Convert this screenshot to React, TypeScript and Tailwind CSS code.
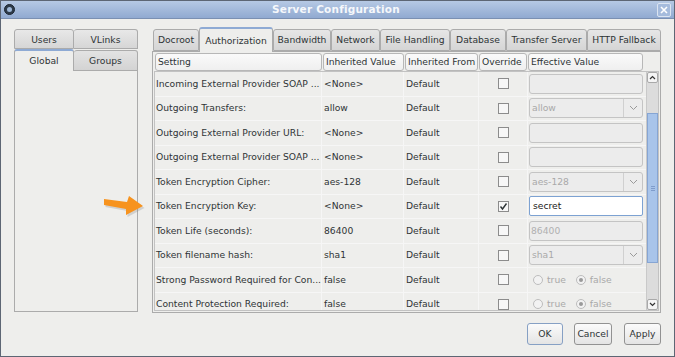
import React from "react";

type Effective =
  | { kind: "input"; value?: string; active?: boolean }
  | { kind: "combo"; value: string }
  | { kind: "radio" };

interface Row {
  setting: string;
  inherited: string;
  from: string;
  override: boolean;
  effective: Effective;
}

const rows: Row[] = [
  { setting: "Incoming External Provider SOAP ...", inherited: "<None>", from: "Default", override: false, effective: { kind: "input" } },
  { setting: "Outgoing Transfers:", inherited: "allow", from: "Default", override: false, effective: { kind: "combo", value: "allow" } },
  { setting: "Outgoing External Provider URL:", inherited: "<None>", from: "Default", override: false, effective: { kind: "input" } },
  { setting: "Outgoing External Provider SOAP ...", inherited: "<None>", from: "Default", override: false, effective: { kind: "input" } },
  { setting: "Token Encryption Cipher:", inherited: "aes-128", from: "Default", override: false, effective: { kind: "combo", value: "aes-128" } },
  { setting: "Token Encryption Key:", inherited: "<None>", from: "Default", override: true, effective: { kind: "input", value: "secret", active: true } },
  { setting: "Token Life (seconds):", inherited: "86400", from: "Default", override: false, effective: { kind: "input", value: "86400" } },
  { setting: "Token filename hash:", inherited: "sha1", from: "Default", override: false, effective: { kind: "combo", value: "sha1" } },
  { setting: "Strong Password Required for Con...", inherited: "false", from: "Default", override: false, effective: { kind: "radio" } },
  { setting: "Content Protection Required:", inherited: "false", from: "Default", override: false, effective: { kind: "radio" } },
];

const topTabs = [
  { label: "Docroot", w: "w-[46px]" },
  { label: "Authorization", w: "w-[74px]", active: true },
  { label: "Bandwidth", w: "w-[58px]" },
  { label: "Network", w: "w-[49px]" },
  { label: "File Handling", w: "w-[70px]" },
  { label: "Database", w: "w-[56px]" },
  { label: "Transfer Server", w: "w-[81px]" },
  { label: "HTTP Fallback", w: "w-[74px]" },
];

const Chevron = () => (
  <svg width="9" height="6" viewBox="0 0 9 6">
    <path d="M1 1 L4.5 4.5 L8 1" fill="none" stroke="#9a9a9a" strokeWidth="1" />
  </svg>
);

const Radio = ({ checked }: { checked?: boolean }) => (
  <span className="w-[10px] h-[10px] rounded-full border border-[#bdbdbd] bg-[#f2f2f2] flex items-center justify-center">
    {checked && <span className="w-[4px] h-[4px] rounded-full bg-[#9a9a9a]" />}
  </span>
);

const EffectiveCell = ({ e }: { e: Effective }) => {
  if (e.kind === "combo") {
    return (
      <div className="w-[114px] h-[20px] rounded-[3px] border border-[#c4c4c4] bg-[#ececec] flex items-center">
        <span className="flex-1 pl-[2px] text-[#a9a9a9]">{e.value}</span>
        <span className="w-[19px] h-full border-l border-[#d0d0d0] flex items-center justify-center">
          <Chevron />
        </span>
      </div>
    );
  }
  if (e.kind === "radio") {
    return (
      <div className="flex items-center h-[20px] pl-[4px] text-[#a9a9a9]">
        <Radio />
        <span className="ml-[4px]">true</span>
        <span className="ml-[10px]">
          <Radio checked />
        </span>
        <span className="ml-[4px]">false</span>
      </div>
    );
  }
  return (
    <div
      className={
        e.active
          ? "w-[114px] h-[20px] rounded-[2px] border border-[#7da2d2] bg-white flex items-center pl-[3px] text-[#222]"
          : "w-[114px] h-[20px] rounded-[3px] border border-[#c4c4c4] bg-[#ececec] flex items-center pl-[1px] text-[#b0b0b0]"
      }
    >
      {e.value}
    </div>
  );
};

export default function App() {
  return (
    <div className="relative w-[675px] h-[357px] bg-[#eeeeec] border border-[#5d6674] flex flex-col font-['DejaVu_Sans',sans-serif] text-[9.2px] text-[#2e3436] overflow-hidden">
      {/* title bar */}
      <div className="h-[18px] flex items-center bg-gradient-to-b from-[#b6c9e4] to-[#91aad1] border-b border-[#7b90b2] px-[3px]">
        <span className="w-[11px] h-[11px] rounded-full bg-[#2e3b4a] border border-[#1c2530] flex items-center justify-center">
          <span className="w-[5px] h-[5px] rounded-full bg-[#9fb8d8]" />
        </span>
        <span className="flex-1 text-center text-[10.5px] font-bold text-[#f6f8fb] tracking-[0.2px]">Server Configuration</span>
        <span className="w-[14px] h-[14px] rounded-[2px] border border-[#dbe4f1] bg-[#a5bbdc] flex items-center justify-center">
          <svg width="8" height="8" viewBox="0 0 8 8">
            <path d="M1 1 L7 7 M7 1 L1 7" stroke="#ffffff" strokeWidth="1.6" />
          </svg>
        </span>
      </div>

      <div className="flex-1 flex flex-col px-[13px] pt-[8px]">
        <div className="flex gap-[14px]">
          {/* left tabs */}
          <div className="w-[124px] flex flex-col mt-[2px]">
            <div className="flex h-[20px]">
              <div className="w-[60px] rounded-t-[3px] border border-[#ababab] bg-gradient-to-b from-[#e8e8e8] to-[#d6d6d6] flex items-center justify-center pt-[2px]">Users</div>
              <div className="w-[64px] rounded-t-[3px] border border-l-0 border-[#ababab] bg-gradient-to-b from-[#e8e8e8] to-[#d6d6d6] flex items-center justify-center pt-[2px]">VLinks</div>
            </div>
            <div className="flex h-[22px] items-end">
              <div className="w-[60px] h-[22px] rounded-t-[3px] border border-b-0 border-[#ababab] border-t-2 border-t-[#8eaad4] bg-[#eeeeec] flex items-center justify-center relative z-10">Global</div>
              <div className="w-[64px] h-[21px] rounded-t-[3px] border border-l-0 border-[#ababab] bg-gradient-to-b from-[#e3e3e3] to-[#d3d3d3] flex items-center justify-center">Groups</div>
            </div>
            <div className="h-[242px] border border-[#ababab] -mt-[1px] bg-[#eeeeec]" />
          </div>

          {/* right side */}
          <div className="w-[509px] flex flex-col">
            <div className="flex h-[24px] items-end pl-[1px]">
              {topTabs.map((t) =>
                t.active ? (
                  <div
                    key={t.label}
                    className={`${t.w} h-[25px] rounded-t-[3px] border border-b-0 border-[#ababab] border-t-2 border-t-[#8eaad4] bg-[#eeeeec] flex items-center justify-center relative z-10 -mb-[1px]`}
                  >
                    {t.label}
                  </div>
                ) : (
                  <div
                    key={t.label}
                    className={`${t.w} h-[22px] rounded-t-[3px] border border-[#ababab] bg-gradient-to-b from-[#e6e6e6] to-[#d5d5d5] flex items-center justify-center`}
                  >
                    {t.label}
                  </div>
                )
              )}
            </div>
            <div className="h-[262px] border border-[#ababab] p-[1px] flex flex-col">
              {/* header */}
              <div className="flex h-[18px] gap-[1px] pl-[1px]">
                {[
                  { l: "Setting", w: "w-[167px]" },
                  { l: "Inherited Value", w: "w-[81px]" },
                  { l: "Inherited From", w: "w-[73px]" },
                  { l: "Override", w: "w-[48px]" },
                  { l: "Effective Value", w: "w-[115px]" },
                ].map((h) => (
                  <div
                    key={h.l}
                    className={`${h.w} rounded-[3px] border border-[#b7b7b7] bg-gradient-to-b from-[#fafafa] to-[#efefef] flex items-center pl-[2px]`}
                  >
                    {h.l}
                  </div>
                ))}
              </div>
              <div className="flex flex-1 min-h-0 border border-[#c2c2c2]">
                <div className="flex-1 overflow-hidden">
                  {rows.map((r) => (
                    <div key={r.setting} className="flex h-[24.5px] items-center border-b border-[#f6f6f6] whitespace-nowrap">
                      <div className="w-[167px] h-full flex items-center pl-[1px] border-r border-[#f6f6f6] overflow-hidden">{r.setting}</div>
                      <div className="w-[82px] h-full flex items-center pl-[2px] border-r border-[#f6f6f6]">{r.inherited}</div>
                      <div className="w-[75px] h-full flex items-center pl-[2px] border-r border-[#f6f6f6]">{r.from}</div>
                      <div className="w-[49px] h-full flex items-center justify-center border-r border-[#f6f6f6]">
                        <span className="w-[11px] h-[11px] border border-[#8c8c8c] bg-[#f7f7f7] flex items-center justify-center">
                          {r.override && (
                            <svg width="9" height="9" viewBox="0 0 9 9">
                              <path d="M1.5 4.5 L3.5 7 L7.5 1.5" fill="none" stroke="#2e3436" strokeWidth="1.4" />
                            </svg>
                          )}
                        </span>
                      </div>
                      <div className="flex-1 h-full flex items-center pl-[1px]">
                        <EffectiveCell e={r.effective} />
                      </div>
                    </div>
                  ))}
                </div>
                {/* scrollbar */}
                <div className="w-[12px] flex flex-col border-l border-[#c9c9c9] bg-[#dcdcdc]">
                  <div className="h-[11px] border border-[#a9a9a9] rounded-[2px] bg-[#f5f5f5] flex items-center justify-center">
                    <svg width="7" height="5" viewBox="0 0 7 5">
                      <path d="M1 4 L3.5 1.5 L6 4" fill="none" stroke="#333" strokeWidth="1.2" />
                    </svg>
                  </div>
                  <div className="h-[30px]" />
                  <div className="h-[150px] bg-[#a8c4ea] border border-[#86a5d3] flex items-center justify-center">
                    <div className="flex flex-col gap-[1px]">
                      <span className="w-[4px] h-[1px] bg-[#7f9ccb]" />
                      <span className="w-[4px] h-[1px] bg-[#7f9ccb]" />
                      <span className="w-[4px] h-[1px] bg-[#7f9ccb]" />
                    </div>
                  </div>
                  <div className="flex-1" />
                  <div className="h-[11px] border border-[#a9a9a9] rounded-[2px] bg-[#f5f5f5] flex items-center justify-center">
                    <svg width="7" height="5" viewBox="0 0 7 5">
                      <path d="M1 1 L3.5 3.5 L6 1" fill="none" stroke="#333" strokeWidth="1.2" />
                    </svg>
                  </div>
                </div>
              </div>
            </div>
          </div>
        </div>

        {/* buttons */}
        <div className="flex justify-end mt-[10px]">
          <button className="w-[36px] h-[22px] rounded-[3px] border border-[#86a0c4] bg-gradient-to-b from-[#fbfbfb] to-[#e4e4e4]">OK</button>
          <button className="w-[38px] h-[22px] ml-[11px] rounded-[3px] border border-[#929292] bg-gradient-to-b from-[#fbfbfb] to-[#e4e4e4]">Cancel</button>
          <button className="w-[37px] h-[22px] ml-[12px] rounded-[3px] border border-[#929292] bg-gradient-to-b from-[#fbfbfb] to-[#e4e4e4]">Apply</button>
        </div>
      </div>

      {/* annotation arrow */}
      <svg className="absolute left-[100px] top-[192px]" width="48" height="28" viewBox="0 0 48 28">
        <path d="M3 6 L26 9 L28 3 L42 13 L25 22 L25 16 L3 12 Z" fill="#8a8a8a" opacity="0.3" transform="translate(1.5 2)" />
        <path d="M3 6 L26 9 L28 3 L42 13 L25 22 L25 16 L3 12 Z" fill="#f7931e" />
      </svg>
    </div>
  );
}
